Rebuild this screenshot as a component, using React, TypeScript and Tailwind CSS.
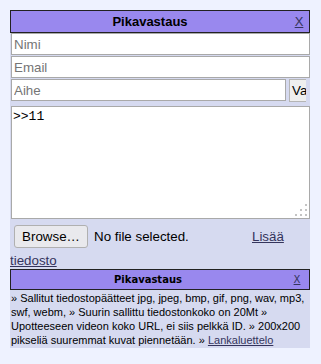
import React from 'react'

const inputCls =
  'block h-[22px] border border-[#a9a9a9] bg-white px-[2px] text-[13.33px] text-black placeholder:text-[#757575] outline-none'

export default function App() {
  return (
    <div className="min-h-screen bg-[#eef2ff] pt-[10px] pl-[10px] font-['Liberation_Sans',Arial,sans-serif]">
      <div className="w-[300px] overflow-hidden bg-[#d6daf0]">
        {/* Header */}
        <div className="flex h-[23px] items-center border border-[#222] bg-[#9988ee]">
          <div className="flex-1 text-center text-[13px] font-bold text-black">Pikavastaus</div>
          <a href="#" className="w-[20px] text-center text-[13px] text-[#34345c] underline">
            X
          </a>
        </div>

        {/* Inputs */}
        <div className="flex flex-col gap-[1px] pl-[1px]">
          <input className={`${inputCls} w-[299px]`} placeholder="Nimi" />
          <input className={`${inputCls} w-[299px]`} placeholder="Email" />
          <div className="flex h-[24px] w-[295px] items-start gap-[3px] overflow-hidden whitespace-nowrap">
            <input className={`${inputCls} w-[275px] shrink-0`} placeholder="Aihe" />
            <button className="h-[23px] w-[40px] shrink-0 border border-[#b5b5b5] bg-[#efefef] px-[2px] text-left text-[13.33px] text-black">
              Vastaa
            </button>
          </div>
          <div className="relative mt-[2px] h-[113px] w-[299px]">
            <textarea
              defaultValue=">>11"
              className="block h-full w-full resize-none border border-[#a9a9a9] bg-white px-[1px] py-[2px] font-['Liberation_Mono',monospace] text-[13px] leading-[15px] text-black outline-none"
            />
            <div className="pointer-events-none absolute right-[3px] bottom-[3px] grid grid-cols-3 gap-[3px]">
              <span className="h-[2px] w-[2px]" />
              <span className="h-[2px] w-[2px]" />
              <span className="h-[2px] w-[2px] bg-[#c4c4c4]" />
              <span className="h-[2px] w-[2px]" />
              <span className="h-[2px] w-[2px] bg-[#c4c4c4]" />
              <span className="h-[2px] w-[2px] bg-[#c4c4c4]" />
              <span className="h-[2px] w-[2px] bg-[#c4c4c4]" />
              <span className="h-[2px] w-[2px] bg-[#c4c4c4]" />
              <span className="h-[2px] w-[2px] bg-[#c4c4c4]" />
            </div>
          </div>
        </div>

        {/* File row */}
        <div className="mt-[6px] flex items-center text-[13.33px] text-black">
          <div className="ml-[4px] flex w-[233px] items-center">
            <span className="flex h-[23px] w-[74px] items-center justify-center rounded-[3px] border border-[#b0b0b0] bg-[#e9e9ed]">
              Browse…
            </span>
            <span className="ml-[6px]">No file selected.</span>
          </div>
          <a href="#" className="ml-[5px] text-[#34345c] underline">
            Lisää
          </a>
        </div>
        <div className="mt-[5px] h-[16px] text-[13.33px] leading-[16px]">
          <a href="#" className="text-[#34345c] underline">
            tiedosto
          </a>
        </div>

        {/* Second header */}
        <div className="flex h-[21px] items-center border border-[#222] bg-[#9988ee]">
          <div className="flex-1 text-center font-['DejaVu_Sans',sans-serif] text-[10px] font-bold text-black">
            Pikavastaus
          </div>
          <a href="#" className="w-[24px] text-center font-['DejaVu_Sans',sans-serif] text-[10px] text-[#34345c] underline">
            X
          </a>
        </div>

        {/* Rules */}
        <div className="pl-[1px] pt-[1px] pb-[1px] text-[11px] leading-[14px] text-black">
          » Sallitut tiedostopäätteet jpg, jpeg, bmp, gif, png, wav, mp3, swf, webm, » Suurin sallittu
          tiedostonkoko on 20Mt » Upotteeseen videon koko URL, ei siis pelkkä ID. » 200x200 pikseliä
          suuremmat kuvat piennetään. »{' '}
          <a href="#" className="text-[#34345c] underline">
            Lankaluettelo
          </a>
        </div>
      </div>
    </div>
  )
}
